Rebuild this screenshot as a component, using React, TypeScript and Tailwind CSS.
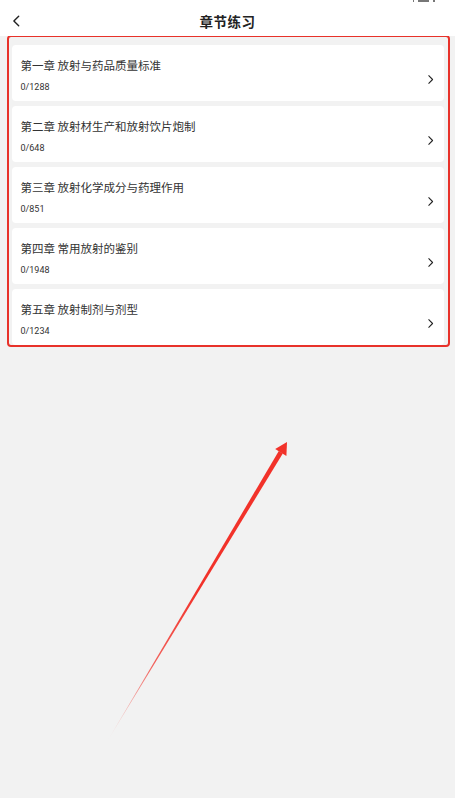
import React from "react";

type Chapter = {
  title: string;
  done: number;
  total: number;
};

const chapters: Chapter[] = [
  { title: "第一章 放射与药品质量标准", done: 0, total: 1288 },
  { title: "第二章 放射材生产和放射饮片炮制", done: 0, total: 648 },
  { title: "第三章 放射化学成分与药理作用", done: 0, total: 851 },
  { title: "第四章 常用放射的鉴别", done: 0, total: 1948 },
  { title: "第五章 放射制剂与剂型", done: 0, total: 1234 },
];

function Chevron({ dir, className }: { dir: "left" | "right"; className?: string }) {
  return (
    <svg viewBox="0 0 10 16" className={className} fill="none">
      <path
        d={dir === "right" ? "M2.5 2.5 L8 8 L2.5 13.5" : "M7.5 2.5 L2 8 L7.5 13.5"}
        stroke="#222"
        strokeWidth="1.6"
        strokeLinecap="round"
        strokeLinejoin="round"
      />
    </svg>
  );
}

export default function App() {
  return (
    <div
      className="relative w-[455px] h-[798px] overflow-hidden bg-[#f2f2f2]"
      style={{ fontFamily: '"Noto Sans CJK SC", "Noto Sans", sans-serif' }}
    >
      {/* header */}
      <div className="relative h-[36px] bg-white flex items-center justify-center">
        {/* cut-off status bar icons */}
        <div className="absolute top-0 right-[20px] flex gap-[4px]">
          <div className="w-[1px] h-[2px] bg-[#777]" />
          <div className="w-[11px] h-[2px] bg-[#777]" />
          <div className="w-[2px] h-[2px] bg-[#777]" />
        </div>
        <button className="absolute left-[12px] top-[14px]">
          <Chevron dir="left" className="w-[9px] h-[14px]" />
        </button>
        <h1 className="text-[13.5px] font-semibold text-[#222] mt-[7px] tracking-[0.5px]">章节练习</h1>
      </div>

      {/* chapter list */}
      <div className="ml-[7px] mr-[5px] -mt-[1px] border-[2.5px] border-[#e8322a] rounded-[4px] pl-[2.5px] pr-[4.5px] pt-[8px] pb-0">
        <div className="flex flex-col gap-[5px]">
          {chapters.map((c, key) => (
            <div
              key={key}
              className="h-[56px] bg-white rounded-[4px] flex items-center pl-[9px] pr-[10px]"
            >
              <div className="flex-1 flex flex-col">
                <span className="text-[11.5px] leading-[14px] text-[#333] mt-[4px]">{c.title}</span>
                <span
                  className="text-[9px] leading-[11px] text-[#333] mt-[10px]"
                  style={{ fontFamily: "Roboto, sans-serif" }}
                >
                  {c.done}/{c.total}
                </span>
              </div>
              <Chevron dir="right" className="w-[7px] h-[11px] mt-[12px]" />
            </div>
          ))}
        </div>
      </div>

      {/* annotation arrow */}
      <svg className="absolute left-0 top-0 w-[455px] h-[798px] pointer-events-none" viewBox="0 0 455 798">
        <defs>
          <linearGradient id="fade" x1="108" y1="740" x2="287" y2="442" gradientUnits="userSpaceOnUse">
            <stop offset="0" stopColor="#f2322a" stopOpacity="0.05" />
            <stop offset="0.25" stopColor="#f2322a" stopOpacity="0.75" />
            <stop offset="0.5" stopColor="#f2322a" stopOpacity="1" />
            <stop offset="1" stopColor="#f2322a" stopOpacity="1" />
          </linearGradient>
        </defs>
        <polygon points="108,740 282.8,453.6 278.8,451" fill="url(#fade)" />
        <polygon points="287,442 286.4,456 275.2,449" fill="#f2322a" />
      </svg>
    </div>
  );
}
